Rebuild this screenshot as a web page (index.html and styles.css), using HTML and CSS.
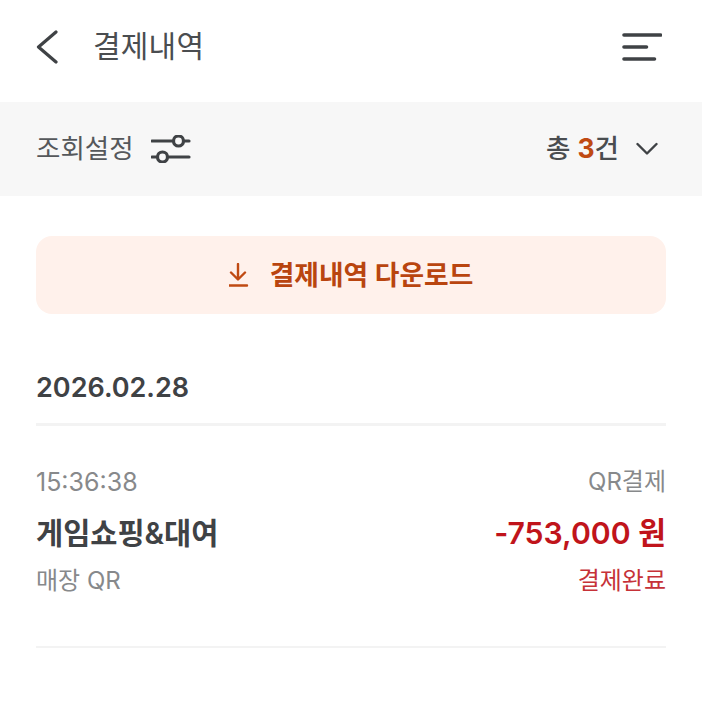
FILE: index.html
```html
<!DOCTYPE html>
<html lang="ko">
<head>
    <meta charset="UTF-8">
    <meta name="viewport" content="width=device-width, initial-scale=1.0">
    <title>결제내역</title>
    <link rel="stylesheet" href="styles.css">
</head>
<body>

    <header class="top-bar">
        <div class="top-left">
            <svg class="icon-back" width="22" height="36" viewBox="0 0 22 36" fill="none">
                <path d="M20 3 L2.5 18 L20 33" />
            </svg>
            <h1 class="page-title">결제내역</h1>
        </div>
        <svg class="icon-menu" width="40" height="30" viewBox="0 0 40 30" fill="none">
            <path d="M2 3 H38.5 M2 15 H24.5 M2 27 H32.5" />
        </svg>
    </header>

    <section class="filter-bar">
        <div class="filter-left">
            <span>조회설정</span>
            <svg class="icon-filter" width="40" height="28" viewBox="0 0 40 28" fill="none">
                <path d="M1 6 H22.5 M32.5 6 H38 M1 22 H6.5 M16.5 22 H38" />
                <circle cx="27.5" cy="6" r="5" />
                <circle cx="11.5" cy="22" r="5" />
            </svg>
        </div>
        <div class="filter-right">
            <span>총 <b class="count">3</b>건</span>
            <svg class="icon-chevron" width="22" height="14" viewBox="0 0 22 14" fill="none">
                <path d="M1.5 2 L11 11.5 L20.5 2" />
            </svg>
        </div>
    </section>

    <main class="content">
        <button class="download-btn">
            <svg class="icon-download" width="20" height="24" viewBox="0 0 20 24" fill="none">
                <path d="M9 1 V16 M2 9.5 L9 16.5 L16 9.5 M0 22.5 H18" />
            </svg>
            <span>결제내역 다운로드</span>
        </button>

        <h2 class="date">2026.02.28</h2>

        <div class="pay-row">
            <div class="pay-line">
                <span class="time">15:36:38</span>
                <span class="muted">QR결제</span>
            </div>
            <div class="pay-line pay-main">
                <span class="shop">게임쇼핑&amp;대여</span>
                <span class="amount">-753,000 원</span>
            </div>
            <div class="pay-line">
                <span class="muted">매장 QR</span>
                <span class="status">결제완료</span>
            </div>
        </div>
    </main>

</body>
</html>
```

FILE: styles.css
```css
body {
    margin: 0;
    background-color: #fff;
    color: #3f4245;
    font-family: Inter, "Noto Sans CJK KR", sans-serif;
}
svg {
    display: block;
    stroke-linecap: round;
    stroke-linejoin: round;
}
.top-bar {
    height: 102px;
    padding: 0 40px 8px 36px;
    box-sizing: border-box;
    display: flex;
    align-items: center;
    justify-content: space-between;
}
.top-left {
    display: flex;
    align-items: center;
    gap: 35px;
}
.icon-back path {
    stroke: #3f4245;
    stroke-width: 3.2;
}
.icon-menu path {
    stroke: #3f4245;
    stroke-width: 3.6;
}
.page-title {
    margin: 0 0 2px;
    font-size: 30px;
    line-height: 40px;
    font-weight: 400;
    letter-spacing: 0.2px;
    color: #4a4d50;
}
.filter-bar {
    height: 94px;
    padding: 0 44px 0 36px;
    display: flex;
    align-items: center;
    justify-content: space-between;
    background-color: #f7f7f7;
    font-size: 26.5px;
    line-height: 36px;
}
.filter-left,
.filter-right {
    display: flex;
    align-items: center;
}
.filter-left {
    gap: 17px;
    color: #55585b;
}
.filter-left span,
.filter-right span {
    margin-bottom: 2px;
}
.filter-right {
    gap: 17px;
    color: #4a4d50;
    font-weight: 500;
}
.icon-filter path,
.icon-filter circle {
    stroke: #3f4245;
    stroke-width: 3.2;
}
.icon-chevron path {
    stroke: #3f4245;
    stroke-width: 2.4;
}
.count {
    color: #c04a12;
    font-weight: 700;
}
.content {
    padding: 40px 36px 0;
}
.download-btn {
    width: 100%;
    height: 78px;
    padding: 0;
    border: none;
    border-radius: 16px;
    background-color: #fff1eb;
    color: #b9450f;
    font-family: inherit;
    font-size: 26.75px;
    line-height: 36px;
    font-weight: 600;
    display: flex;
    align-items: center;
    justify-content: center;
    gap: 21px;
}
.icon-download path {
    stroke: #c04a12;
    stroke-width: 2.4;
}
.date {
    margin: 0;
    padding: 55px 0 16px;
    border-bottom: 3px solid #f3f3f3;
    font-size: 27px;
    line-height: 38px;
    font-weight: 600;
}
.pay-row {
    height: 222px;
    padding-top: 39px;
    box-sizing: border-box;
    border-bottom: 2px solid #f3f3f3;
}
.pay-line {
    display: flex;
    align-items: center;
    justify-content: space-between;
    height: 34px;
    line-height: 34px;
}
.pay-main {
    height: 40px;
    line-height: 40px;
    margin: 14px 0 11px;
}
.time {
    font-size: 25px;
    color: #87898b;
}
.muted {
    font-size: 24px;
    color: #87898b;
}
.shop {
    font-size: 29.5px;
    font-weight: 600;
}
.amount {
    font-size: 30.2px;
    font-weight: 600;
    color: #c0141b;
}
.status {
    font-size: 24px;
    color: #c63238;
}
```
